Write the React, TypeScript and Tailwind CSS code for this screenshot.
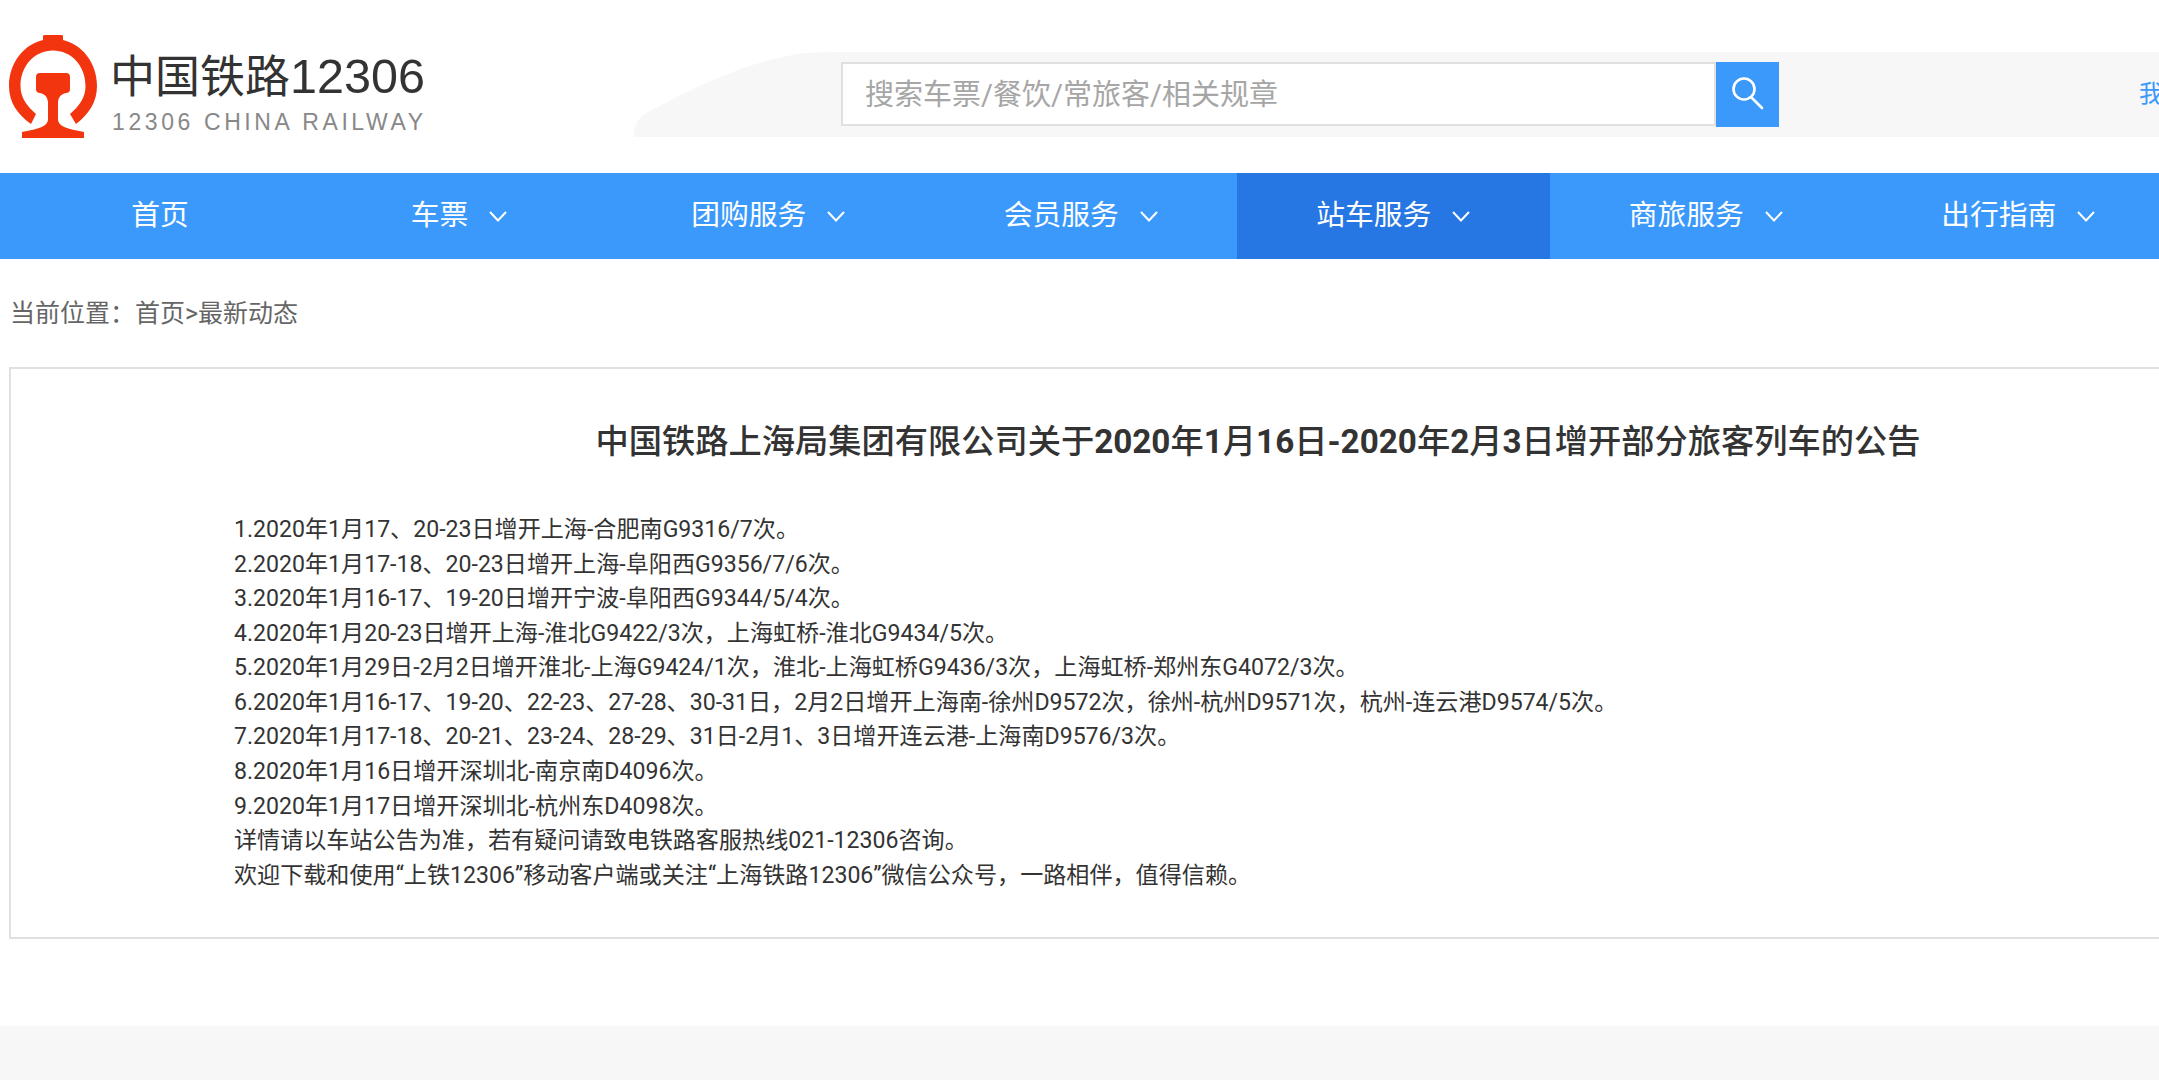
import React from "react";

const navItems = [
  { label: "车票", width: "w-[306px]" },
  { label: "团购服务", width: "w-[312.5px]" },
  { label: "会员服务", width: "w-[312.5px]" },
  { label: "站车服务", width: "w-[312.5px]", active: true },
  { label: "商旅服务", width: "w-[312.5px]" },
  { label: "出行指南", width: "w-[312.5px]" },
];

const lines = [
  "1.2020年1月17、20-23日增开上海-合肥南G9316/7次。",
  "2.2020年1月17-18、20-23日增开上海-阜阳西G9356/7/6次。",
  "3.2020年1月16-17、19-20日增开宁波-阜阳西G9344/5/4次。",
  "4.2020年1月20-23日增开上海-淮北G9422/3次，上海虹桥-淮北G9434/5次。",
  "5.2020年1月29日-2月2日增开淮北-上海G9424/1次，淮北-上海虹桥G9436/3次，上海虹桥-郑州东G4072/3次。",
  "6.2020年1月16-17、19-20、22-23、27-28、30-31日，2月2日增开上海南-徐州D9572次，徐州-杭州D9571次，杭州-连云港D9574/5次。",
  "7.2020年1月17-18、20-21、23-24、28-29、31日-2月1、3日增开连云港-上海南D9576/3次。",
  "8.2020年1月16日增开深圳北-南京南D4096次。",
  "9.2020年1月17日增开深圳北-杭州东D4098次。",
  "详情请以车站公告为准，若有疑问请致电铁路客服热线021-12306咨询。",
  "欢迎下载和使用“上铁12306”移动客户端或关注“上海铁路12306”微信公众号，一路相伴，值得信赖。",
];

const Logo: React.FC = () => (
  <svg viewBox="0 0 89 104" className="w-[89px] h-[104px] shrink-0">
    <path
      fill="#f2350f"
      d="M22 90C8 80 0 68 0 52C0 28 16 10 34 6V2Q34 1 36 1H52Q54 1 54 2V6C72 10 88 28 88 52C88 68 80 80 67 90L61 80C70 72 76.5 64 76.5 52C76.5 31.5 62 16.5 44 16.5C26 16.5 11.5 31.5 11.5 52C11.5 64 18 72 27 80Z"
    />
    <path
      fill="#f2350f"
      d="M31 39H57Q61 39 61 43V55Q61 59 57 59C52 60 49.5 63 49 68V86C49.5 92 58 95 75 98V104H13V98C30 95 38.5 92 39 86V68C38.5 63 36 60 31 59Q27 59 27 55V43Q27 39 31 39Z"
    />
  </svg>
);

const Chevron: React.FC = () => (
  <svg viewBox="0 0 18 11" className="w-[18px] h-[11px]" fill="none" stroke="#fff" strokeWidth="2">
    <path d="M1 1l8 8.5 8-8.5" />
  </svg>
);

export default function App() {
  return (
    <div
      className="w-full h-[1080px] overflow-hidden bg-white flex flex-col"
      style={{ fontFamily: 'Roboto, "Noto Sans CJK SC", sans-serif' }}
    >
      <header className="h-[173px] shrink-0 flex relative">
        <div className="w-[634px] shrink-0 flex pl-[9px] pt-[34px]">
          <Logo />
          <div className="ml-[12px] pt-[9px]">
            <div className="text-[45px] leading-[66px] text-[#333] whitespace-nowrap" style={{ fontFamily: '"Liberation Sans", "Noto Sans CJK SC", sans-serif' }}>
              中国铁路<span className="text-[48.5px]">12306</span>
            </div>
            <div className="text-[23px] leading-[26px] ml-[2px] -mt-[2px] text-[#888] tracking-[3.6px] whitespace-nowrap" style={{ fontFamily: '"Liberation Sans", sans-serif' }}>
              12306 CHINA RAILWAY
            </div>
          </div>
        </div>
        <div className="flex-1 min-w-0 flex h-[85px] mt-[52px] overflow-hidden">
          <svg viewBox="0 0 207 85" className="w-[207px] h-[85px] shrink-0" preserveAspectRatio="none">
            <path fill="#f7f7f7" d="M0 85C0 72 4 66 14 60C60 36 110 10 165 2Q178 0 207 0V85Z" />
          </svg>
          <div className="flex-1 min-w-0 bg-[#f7f7f7] flex items-center pb-[1px]">
            <input
              readOnly
              placeholder="搜索车票/餐饮/常旅客/相关规章"
              className="w-[875px] h-[64px] shrink-0 bg-white border-2 border-[#e0e0e0] pl-[22px] pt-[2px] text-[29px] outline-none placeholder:text-[#a6a6a6]"
            />
            <button className="w-[63px] h-[65px] shrink-0 bg-[#3b99fc] flex items-center justify-center">
              <svg viewBox="0 0 32 34" className="w-[32px] h-[34px]" fill="none" stroke="#fff" strokeWidth="2.6">
                <circle cx="12" cy="12" r="10.5" />
                <path d="M20 21l10 10" strokeLinecap="round" />
              </svg>
            </button>
            <div className="ml-[360px] text-[24px] text-[#3b99fc] whitespace-nowrap">我的12306</div>
          </div>
        </div>
      </header>

      <nav className="h-[86px] shrink-0 bg-[#3b99fc] flex overflow-hidden text-white text-[28.8px]">
        <div className="w-[306px] shrink-0 pl-[14px] flex items-center justify-center">首页</div>
        {navItems.map((item) => (
          <div
            key={item.label}
            className={`${item.width} shrink-0 flex items-center justify-center gap-[21px] ${item.active ? "bg-[#2676e3]" : ""}`}
          >
            <span>{item.label}</span>
            <Chevron />
          </div>
        ))}
      </nav>

      <div className="h-[108px] shrink-0 flex items-center pl-[10px] pt-[2px] text-[25px] text-[#666]">
        当前位置：首页&gt;最新动态
      </div>

      <div className="flex-1 min-h-0 overflow-hidden pl-[9px]">
        <div className="w-[2498px] h-[572px] border-2 border-[#e0e0e0] pt-[51px]">
          <h1 className="text-[33.25px] leading-[44px] font-medium text-center text-[#333]">
            中国铁路上海局集团有限公司关于<span className="font-bold">2020</span>年<span className="font-bold">1</span>月<span className="font-bold">16</span>日<span className="font-bold">-2020</span>年<span className="font-bold">2</span>月<span className="font-bold">3</span>日增开部分旅客列车的公告
          </h1>
          <div className="mt-[49px] pl-[223px] text-[23.1px] leading-[34.56px] text-[#333]">
            {lines.map((line) => (
              <div key={line}>{line}</div>
            ))}
          </div>
        </div>
      </div>

      <footer className="h-[54px] shrink-0 bg-[#f7f7f7]" />
    </div>
  );
}
